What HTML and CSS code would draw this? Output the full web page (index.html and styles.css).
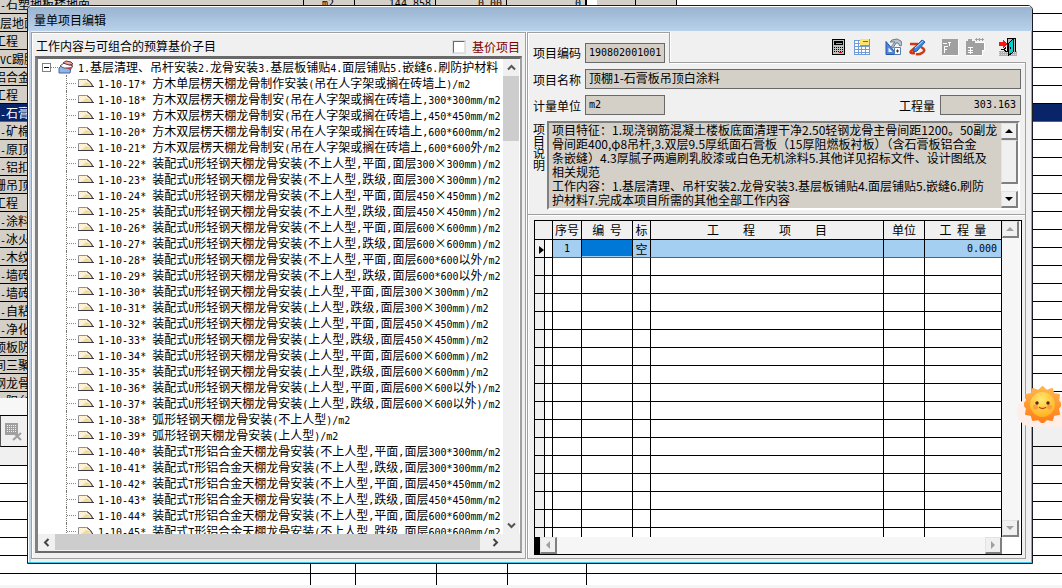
FILE: index.html
```html
<!DOCTYPE html>
<html lang="zh-CN">
<head>
<meta charset="utf-8">
<title>量单项目编辑</title>
<link rel="stylesheet" href="styles.css">
</head>
<body>
<div class="backdrop">
  <div class="back-rows" id="backRows"></div>
  <div class="back-gap"></div>
  <div class="back-tools">
    <svg width="18" height="18" viewBox="0 0 18 18" shape-rendering="crispEdges"><path fill="#a0a0a0" d="M0 0h13v12H0z"/><path stroke="#f0f0f0" stroke-dasharray="1 1" d="M2 2.5h10M2 4.5h10M2 6.5h10M2 8.5h10"/><path stroke="#a0a0a0" stroke-width="2" d="M9 10l7 7M16 10l-8 7" shape-rendering="auto"/></svg>
  </div>
  <div class="back-head"></div>
  <div class="back-grid" id="backGrid"></div>
</div>

<main class="dialog">
  <h1 class="title">量单项目编辑</h1>
  <div class="content">
    <section class="left">
      <div class="left-head">
        <span class="left-title">工作内容与可组合的预算基价子目</span>
        <label class="base"><input type="checkbox"><span>基价项目</span></label>
      </div>
      <div class="tree-box">
        <ul class="tree" id="tree"></ul>
        <div class="vbar">
          <button type="button" aria-label="向上"><svg width="9" height="7" viewBox="0 0 9 7"><path d="M1 5.500L4.500 2L8 5.500" fill="none" stroke="#555" stroke-width="2"/></svg></button>
          <div class="track"><div class="thumb"></div></div>
          <button type="button" aria-label="向下"><svg width="9" height="7" viewBox="0 0 9 7"><path d="M1 1.500L4.500 5L8 1.500" fill="none" stroke="#555" stroke-width="2"/></svg></button>
        </div>
        <div class="hbar">
          <button type="button" aria-label="向左"><svg width="7" height="9" viewBox="0 0 7 9"><path d="M5.500 1L2 4.500L5.500 8" fill="none" stroke="#444" stroke-width="2"/></svg></button>
          <div class="track"><div class="thumb"></div></div>
          <button type="button" aria-label="向右"><svg width="7" height="9" viewBox="0 0 7 9"><path d="M1.500 1L5 4.500L1.500 8" fill="none" stroke="#444" stroke-width="2"/></svg></button>
        </div>
      </div>
    </section>

    <section class="right">
      <div class="top">
        <div class="code-tab">
          <label for="code">项目编码</label>
          <input class="field num" id="code" value="190802001001">
        </div>
        <div class="toolbar">
          <button type="button" aria-label="计算器"><svg width="16" height="18" viewBox="0 0 16 18" shape-rendering="crispEdges"><path d="M1 1h13v16H1z" fill="#000"/><path d="M2 2h11v14H2z" fill="#c0c0c0"/><path d="M3 3h9v4H3z"/><path d="M5 5h6v1H5z" fill="#00e8e8"/><path stroke="#000" stroke-dasharray="1 1" d="M3 9.500h10M3 11.500h10M3 13.500h10"/><path d="M8 14h3v1H8z" fill="red"/></svg></button>
          <button type="button" aria-label="表格"><svg width="17" height="18" viewBox="0 0 17 18" shape-rendering="crispEdges"><path d="M0 2h16v15H0z" fill="#6f9bd8"/><g fill="#fff"><path d="M1 3h3v2H1zM5 3h2v2H5zM1 6h3v2H1zM5 6h2v2H5zM1 9h3v2H1zM5 9h2v2H5zM8 9h3v2H8zM12 9h3v2h-3zM1 12h3v2H1zM5 12h2v2H5zM8 12h3v2H8zM12 12h3v2h-3zM1 15h3v1H1zM5 15h2v1H5zM8 15h3v1H8zM12 15h3v1h-3z"/></g><path d="M6 1h10v7H6z" fill="#c69400"/><path d="M6 1h9v6H6z" fill="#ffe36a"/><path d="M9 3h5v1H9z" fill="#986800"/></svg></button>
          <button type="button" class="gap" aria-label="工具"><svg width="17" height="18" viewBox="0 0 17 18"><path d="M1 3.500v13h11z" fill="#4d86db" stroke="#2456a8"/><path d="M3.500 9.500v4.500h4z" fill="#eaf3ff"/><path d="M5 4l2-2 5-1 4 2 1 4-2 1-2-3h-2L8 10l-2-1 4-5z" fill="#b8c4d0" stroke="#6b7a89"/><path d="M9.500 9.500h6v7h-6z" fill="#fff" stroke="#557db5"/><path d="M11 13h3M12.500 11.500v3" stroke="#333"/></svg></button>
          <button type="button" aria-label="编辑"><svg width="18" height="18" viewBox="0 0 18 18"><path d="M1 6h8M12 9q6 3 1 6q-3 2-6 1M8 8L2 13q-2 3 4 2" fill="none" stroke="#cb3a10" stroke-width="2.500"/><path d="M4 14l1-4 8-8 3 2-8 9z" fill="#3f87e0" stroke="#1c58ac"/><path d="M6 10l8-7" stroke="#bfe0ff"/></svg></button>
          <button type="button" class="gap" disabled aria-label="字体"><svg width="18" height="18" viewBox="0 0 18 18" shape-rendering="crispEdges"><path d="M2 2h16v16H2z" fill="#fff"/><path d="M1 1h16v16H1z" fill="#a0a0a0"/><path fill="none" stroke="#fff" d="M2 5.500h4M7 4.500h3M8.500 5v3M3.500 8v7M4 8.500h3M4 11.500h2"/></svg></button>
          <button type="button" disabled aria-label="价格"><svg width="20" height="19" viewBox="0 0 20 19" shape-rendering="crispEdges"><path d="M1 4h2V2h4v2h12v9h-2v5H1z" fill="#fff"/><path d="M0 3h2V1h4v2h3v2h9v7h-2v5H0z" fill="#a0a0a0"/><path stroke="#a0a0a0" d="M9 1.500h9M10.500 0v3M13.500 0v3M16.500 0v3"/><path fill="none" stroke="#fff" d="M2 9.500h5M2 12.500h5M2 14.500h5M4.500 9v7"/></svg></button>
          <button type="button" class="gap2" aria-label="退出"><svg width="19" height="19" viewBox="0 0 19 19" shape-rendering="crispEdges"><path d="M0 13h18v5H0z" fill="#b0b0b0"/><path stroke="#ddd" stroke-dasharray="1 1" d="M0 14.500h18M0 16.500h18"/><path d="M8 0h9v14H8z" fill="#000"/><path d="M9 1h7v13H9z" fill="#b8b8b8"/><path d="M9 6l5-5v13l-5 4z" fill="#00d0d0" stroke="#000"/><path d="M11 9h1v2h-1z"/><path d="M0 4h4V2l4 4-4 4V8H0z" fill="#f01818"/><path fill="none" stroke="#000" d="M2 11.500h3l2-2M5 12l3 2"/></svg></button>
        </div>
      </div>
      <div class="details">
        <div class="line"><label for="name">项目名称</label><input class="field" id="name" value="顶棚1-石膏板吊顶白涂料"></div>
        <div class="line"><label for="unit">计量单位</label><input class="field num unit" id="unit" value="m2"><span class="spacer"></span><label class="qty-label" for="qty">工程量</label><input class="field num qty" id="qty" value="303.163"></div>
        <div class="note">
          <label for="note">项目说明</label>
          <div class="note-box">
            <textarea id="note">项目特征：1.现浇钢筋混凝土楼板底面清理干净2.50轻钢龙骨主骨间距1200。50副龙
骨间距400,φ8吊杆,3.双层9.5厚纸面石膏板（15厚阻燃板衬板）（含石膏板铝合金
条嵌缝）4.3厚腻子两遍刷乳胶漆或白色无机涂料5.其他详见招标文件、设计图纸及
相关规范
工作内容：1.基层清理、吊杆安装2.龙骨安装3.基层板铺贴4.面层铺贴5.嵌缝6.刷防
护材料7.完成本项目所需的其他全部工作内容</textarea>
            <div class="classic">
              <button type="button" class="up dark" aria-label="向上"></button>
              <div class="classic-thumb"></div>
              <button type="button" class="down dark" aria-label="向下"></button>
            </div>
          </div>
        </div>
      </div>
      <div class="grid-area">
        <div class="grid-frame">
          <div class="grid-view">
            <table class="grid">
              <colgroup><col class="c-mark"><col class="c-pad"><col class="c-no"><col class="c-code"><col class="c-flag"><col><col class="c-unit"><col class="c-qty"></colgroup>
              <thead><tr><th colspan="2"></th><th>序号</th><th>编&nbsp; 号</th><th>标</th><th class="wide"><span>工</span><span>程</span><span>项</span><span>目</span></th><th>单位</th><th>工&nbsp; 程&nbsp; 量</th></tr></thead>
              <tbody id="gridBody"><tr class="current"><td class="mark"><i class="pointer"></i></td><td class="pad"></td><td class="no">1</td><td class="active"></td><td class="flag">空</td><td></td><td></td><td class="amount">0.000</td></tr></tbody>
            </table>
          </div>
          <div class="classic">
            <button type="button" class="up" aria-label="向上"></button>
            <button type="button" class="down" aria-label="向下"></button>
          </div>
          <div class="classic-h">
            <span class="split"></span>
            <button type="button" class="prev" aria-label="向左"></button>
            <button type="button" class="next" aria-label="向右"></button>
          </div>
          <div class="corner"></div>
        </div>
      </div>
    </section>
  </div>
</main>

<div class="sun">
  <svg width="37" height="37" viewBox="0 0 37 37">
    <defs>
      <radialGradient id="face" cx=".45" cy=".3" r=".7"><stop offset="0" stop-color="#ffe873"/><stop offset="1" stop-color="#ffb21e"/></radialGradient>
      <linearGradient id="rays" x2="0" y2="1"><stop offset="0" stop-color="#ffb650"/><stop offset="1" stop-color="#ff7c16"/></linearGradient>
    </defs>
    <path fill="url(#rays)" stroke="url(#rays)" stroke-width="2" stroke-linejoin="round" d="M18.500 1l4 4 5.500-2 1.500 5 5.500 1-1 5.500 3 4-3 4 1 5.500-5.500 1-1.500 5-5.500-1-4 4-4-4-5.500 1-1.500-5-5.500-1 1-5.500-3-4 3-4-1-5.500 5.500-1L9 3l5.500 2z"/>
    <circle cx="18.500" cy="18.500" r="12.500" fill="url(#face)"/>
    <circle cx="11.500" cy="21" r="2.500" fill="#ff9a45"/><circle cx="25.500" cy="21" r="2.500" fill="#ff9a45"/>
    <circle cx="13" cy="17" r="1.700" fill="#5a2410"/><circle cx="24" cy="17" r="1.700" fill="#5a2410"/>
    <path d="M15.500 21.500q3 2 6 0" fill="none" stroke="#c73d12" stroke-width="1.500" stroke-linecap="round"/>
  </svg>
</div>
<script src="app.js"></script>
</body>
</html>
```

FILE: styles.css
```css
* { box-sizing: border-box; }

body {
  margin: 0;
  height: 100vh;
  overflow: hidden;
  position: relative;
  background: #fff;
  color: #000;
  font: 12px/16px "Noto Sans CJK SC", sans-serif;
}

button, input, textarea { font: inherit; color: inherit; margin: 0; padding: 0; border: 0; border-radius: 0; }
button { background: transparent; }

.num, .a { font-family: "DejaVu Sans Mono", monospace; font-size: 10px; }
.x { display: inline-block; width: 12px; text-align: center; }

/* table behind the dialog */
.backdrop { height: 100%; display: flex; flex-direction: column; overflow: hidden; }
.back-rows { height: 398px; flex: none; overflow: hidden; }
.back-row { display: flex; height: 18px; line-height: 17px; white-space: nowrap; }
.back-row:first-child { height: 14px; line-height: 8px; }
.back-row > span { border-right: 1px solid #000; border-bottom: 1px solid #000; background: #d4d0c8; overflow: hidden; padding-right: 4px; text-align: right; flex: none; }
.back-row > .name { width: 304px; text-align: left; }
.back-row > .cut { text-indent: -6px; }
.back-row > .unit-col { width: 51px; padding-right: 20px; }
.back-row > .w81 { width: 81px; }
.back-row > .w71 { width: 71px; }
.back-row > .w80 { width: 80px; border-right-width: 2px; }
.back-row > .w39 { width: 39px; margin-left: 10px; }
.back-row > .w41 { width: 41px; }
.back-row > .rest { flex: 1; background: #fff; border-right: 0; }
.back-row.sel > span { background: #0a246a; color: #fff; border-color: #0078d7; }
.back-gap { height: 18px; flex: none; background: #f7f7f7; border-bottom: 1px solid #000; }
.back-tools { height: 31px; flex: none; background: #f0f0f0; border-bottom: 1px solid #000; padding: 7px 4px; border-left: 1px solid #555; }
.back-head { height: 19px; flex: none; background: #f0f0f0; border-bottom: 1px solid #000; }
.back-grid { flex: 1; overflow: hidden; border-bottom: 3px solid #f4f4f4; }
.back-line { display: flex; height: 18px; border-bottom: 1px solid #000; }
.back-line:last-child { border-bottom: 0; }
.back-line i { border-right: 1px solid #000; width: 81px; }
.back-line i:nth-child(1) { width: 311px; }
.back-line i:nth-child(2) { width: 45px; }
.back-line i:nth-child(4) { width: 71px; }
.back-line i:nth-child(5) { width: 79px; }

/* dialog window */
.dialog {
  position: absolute;
  inset: 5px 29px 24px 27px;
  display: flex;
  flex-direction: column;
  background: #f0f0f0;
  border: 1px solid #1c1c24;
  border-radius: 5px 5px 0 0;
  box-shadow: inset -1px -1px #3cc8e8, inset 1px 0 #fff, inset 3px 0 #c4d4e6;
  overflow: hidden;
}
.title { flex: none; margin: 0; height: 25px; padding-left: 6px; font-size: 12px; line-height: 27px; font-weight: 400; background: linear-gradient(#fff 1px, #99b4d1 1px, #b9d1ea); }
.content { flex: 1; min-height: 0; display: flex; padding: 1px 6px 4px 3px; }

.left { width: 495px; flex: none; display: flex; flex-direction: column; border: 1px solid #a0a0a0; box-shadow: inset 1px 1px #fff, 1px 0 #fff; padding: 0 3px 5px; }
.left-head { height: 23px; flex: none; display: flex; justify-content: space-between; align-items: center; padding: 2px 2px 0 1px; }
.base { display: flex; align-items: center; gap: 7px; color: #800000; padding-top: 2px; }
.base input { appearance: none; width: 12px; height: 12px; background: #fff; border: 1px solid; border-color: #696969 #e3e3e3 #e3e3e3 #696969; outline: 1px solid #ddd; outline-offset: 0; }

.tree-box {
  flex: 1; min-height: 0;
  display: grid;
  grid-template: minmax(0, 1fr) 17px / minmax(0, 1fr) 17px;
  background: #fff;
  border: solid; border-width: 3px 2px 2px 3px;
  border-color: #696969 #a0a0a0 #696969 #808080;
}
.tree { margin: 0; padding: 0; list-style: none; overflow: hidden; white-space: nowrap; }
.tree li { height: 16px; display: flex; align-items: center; padding-left: 28px; }
.tree li::before { content: ""; width: 11px; height: 16px; flex: none; border-left: 1px dotted #777; background: repeating-linear-gradient(90deg, #888 0 1px, transparent 1px 2px) 0 8px / 10px 1px no-repeat; }
.tree li.root { padding-left: 4px; }
.tree li.root::before { display: none; }
.tree svg { flex: none; margin-right: 4px; }
.tree .fold { width: 9px; height: 9px; border: 1px solid #808080; background: linear-gradient(#000, #000) center / 5px 1px no-repeat; }
.tree .dots { width: 7px; height: 1px; background: repeating-linear-gradient(90deg, #888 0 1px, transparent 1px 2px); }
.tree p { margin: 0; line-height: 16px; height: 16px; }
.tree .a { white-space: pre; }

.vbar, .hbar { display: flex; background: #f0f0f0; }
.vbar { flex-direction: column; margin-right: 1px; }
.hbar { grid-column: 1 / 3; }
.vbar button, .hbar button { width: 16px; height: 17px; flex: none; display: grid; place-items: center; }
.hbar button { width: 17px; height: 16px; }
.hbar button:last-child { width: 40px; padding-right: 10px; }
.track { flex: 1; min-height: 0; }
.thumb { background: #cdcdcd; }
.vbar .thumb { height: 65px; }
.hbar .thumb { height: 16px; }

/* right side */
.right { flex: 1; min-width: 0; margin-left: 1px; display: flex; flex-direction: column; }
.top { height: 31px; flex: none; display: flex; }
.code-tab { width: 143px; flex: none; display: flex; align-items: center; padding: 10px 4px 0 5px; border: 1px solid #a0a0a0; border-bottom: 0; box-shadow: inset 1px 1px #fff, 1px 0 #fff; }
.code-tab label { flex: none; width: 52px; }
.code-tab .field { width: 80px; }
.toolbar { flex: 1; border-bottom: 1px solid #a0a0a0; box-shadow: 0 1px #fff; display: flex; justify-content: flex-end; align-items: center; gap: 7px; padding: 0 8px 0 0; }
.toolbar button { flex: none; height: 18px; }
.toolbar svg { display: block; }
.toolbar .gap { margin-left: 7px; }
.toolbar .gap2 { margin-left: 6px; }

.field { min-width: 0; height: 20px; padding: 0 2px 1px 3px; background: #d4d0c8; border: 1px solid #696969; }
.details { flex: none; height: 152px; border: 1px solid #a0a0a0; border-top: 0; box-shadow: inset 1px 0 #fff, 0 1px #fff; padding: 6px 4px 4px 5px; display: flex; flex-direction: column; gap: 6px; }
.line { display: flex; align-items: center; height: 20px; flex: none; }
.line > label { flex: none; width: 52px; padding-top: 1px; }
.line #name { flex: 1; padding-bottom: 3px; }
.line .unit { width: 80px; }
.spacer { flex: 1; }
.line > .qty-label { width: 41px; }
.line .qty { width: 81px; text-align: right; padding-right: 4px; }
.note { display: flex; flex: 1; min-height: 0; }
.note > label { width: 14px; padding: 2px 2px 0 0; line-height: 12px; overflow: hidden; }
.note-box { flex: 1; min-width: 0; display: flex; margin-right: 1px; border: 2px solid; border-color: #808080 #fff #fff #808080; }
.note textarea { flex: 1; min-width: 0; resize: none; overflow: hidden; white-space: pre; background: #d4d0c8; line-height: 14px; padding: 0 3px; outline: 0; }

.classic { width: 17px; flex: none; display: flex; flex-direction: column; background: #f6f6f6; }
.classic button, .classic-h button, .classic-thumb {
  flex: none; width: 17px; height: 17px;
  display: grid; place-items: center;
  background: #f0f0f0;
  border: solid; border-width: 1px 2px 2px 1px;
  border-color: #e3e3e3 #808080 #808080 #e3e3e3;
}
.classic .classic-thumb { height: 44px; }
.classic .down { margin-top: auto; }
.classic button::before, .classic-h button::before { content: ""; border: 4px solid transparent; }
.classic .up::before { border-width: 0 4px 4px; border-bottom-color: #a0a0a0; }
.classic .down::before { border-width: 4px 4px 0; border-top-color: #a0a0a0; }
.classic .dark.up::before { border-bottom-color: #000; }
.classic .dark.down::before { border-top-color: #000; }
.classic-h .prev::before { border-width: 4px 4px 4px 0; border-right-color: #a0a0a0; }
.classic-h .next::before { border-width: 4px 0 4px 4px; border-left-color: #a0a0a0; }

.grid-area { flex: 1; min-height: 0; display: flex; border: 1px solid #a0a0a0; border-top: 0; padding: 5px 3px 3px 6px; box-shadow: inset 1px 0 #fff; }
.grid-frame {
  flex: 1; min-width: 0;
  display: grid;
  grid-template: minmax(0, 1fr) 17px / minmax(0, 1fr) 19px;
  border: 1px solid #000;
  background: #fff;
}
.grid-view { overflow: hidden; }
.grid { width: 100%; table-layout: fixed; border-collapse: separate; border-spacing: 0; line-height: 16px; }
.grid th, .grid td { height: 18px; padding: 0; border-right: 1px solid #000; border-bottom: 1px solid #000; font-weight: 400; text-align: center; white-space: nowrap; }
.grid th { height: 19px; background: #f0f0f0; }
.c-mark { width: 10px; }
.c-pad { width: 8px; }
.c-no { width: 29px; }
.c-code { width: 51px; }
.c-flag { width: 18px; }
.c-unit { width: 41px; }
.c-qty { width: 77px; }
.grid .wide span { display: inline-block; width: 36px; }
.grid .mark { background: #f0f0f0; }
.pointer { display: block; margin: 3px 0 0 4px; width: 0; border: 4px solid transparent; border-width: 4px 0 4px 5px; border-left-color: #000; }
.grid .current td { background: #a5cff0; border-bottom-color: #0078d7; }
.grid .current .mark { background: #f0f0f0; border-bottom-color: #000; }
.grid .current .pad { background: #fff; border-bottom-color: #000; }
.grid .current .active { background: #0078d7; box-shadow: inset 0 -1px #a5cff0; }
.grid .no, .grid .amount { font-family: "DejaVu Sans Mono", monospace; font-size: 10px; }
.grid .amount { text-align: right; padding-right: 4px; }
.grid-frame .classic { padding-right: 1px; width: 18px; }
.classic-h { display: flex; background: #f6f6f6; }
.classic-h .split { width: 5px; background: #000; }
.classic-h .next { margin-left: auto; }

/* mascot floating over the window edge */
.sun { position: absolute; right: 0; top: 397px; width: 45px; height: 30px; border-radius: 15px 0 0 15px; background: #ffeee8; }
.sun svg { position: absolute; right: 1px; top: -11px; }
```

FILE: app.js
```js
const tree = document.getElementById('tree');

// Latin runs use the monospaced face; the multiplication sign takes a full CJK cell.
function mixed(text) {
  return text
    .replace(/[\x21-\x7e ]+/g, run => `<span class="a">${run}</span>`)
    .replace(/×/g, '<span class="x">×</span>');
}

const rootIcon = '<svg width="16" height="14" viewBox="0 0 16 14"><path d="M1 8l3-3 9 3-1 5H1z" fill="#8fb6e6" stroke="#3f68a0"/><path d="M2 6l4-3 9 3-3 2H6z" fill="#fff" stroke="#555"/><path d="M5 3l3-2 5 1 2 2-4 1z" fill="#f4a9a9" stroke="#70333c"/><path d="M8 8l7-1-3 3z" fill="#c43b48"/></svg>';
const leafIcon = '<svg width="16" height="10" viewBox="0 0 16 10"><path d="M.5 8.500V1.500h8q4 2 6 7z" fill="#fff3d6" stroke="#8b9298"/><path d="M3 8l5-4 3 1 2 3z" fill="#f7d9a0"/><path d="M0 8.500h16M9 1.500q4 2 6 7" fill="none" stroke="#3b3b44"/></svg>';

const U = '装配式U形轻钢天棚龙骨安装';
const T = '装配式T形铝合金天棚龙骨安装';
const W = '方木双层楞天棚龙骨制安(吊在人字架或搁在砖墙上,';
const items = [
  '方木单层楞天棚龙骨制作安装(吊在人字架或搁在砖墙上)/m2',
  W + '300*300mm/m2', W + '450*450mm/m2', W + '600*600mm/m2', W + '600*600外/m2'
];
['300×300mm)', '450×450mm)', '600×600mm)', '600*600以外'].forEach(s =>
  ['平面', '跌级'].forEach(k => items.push(`${U}(不上人型,${k},面层${s}/m2`)));
['300×300mm)', '450×450mm)', '600×600mm)', '600×600以外)'].forEach(s =>
  ['平面', '跌级'].forEach(k => items.push(`${U}(上人型,${k},面层${s}/m2`)));
items.push('弧形轻钢天棚龙骨安装(不上人型)/m2', '弧形轻钢天棚龙骨安装(上人型)/m2');
['300*300mm', '450*450mm', '600*600mm'].forEach(s =>
  ['平面', '跌级'].forEach(k => items.push(`${T}(不上人型,${k},面层${s}/m2`)));

tree.innerHTML =
  `<li class="root"><span class="fold"></span><span class="dots"></span>${rootIcon}<p>${mixed('1.基层清理、吊杆安装2.龙骨安装3.基层板铺贴4.面层铺贴5.嵌缝6.刷防护材料')}</p></li>` +
  items.map((t, i) => `<li>${leafIcon}<p>${mixed(`1-10-${17 + i}* ${t}`)}</p></li>`).join('');

const names = ['-石塑地板楼地面', '层地面', '/工程', 'VC踢脚', '/铝合金', '/工程', '-石膏', '-矿棉', '-原顶', '-铝扣', '/栅吊顶', '/工程',
  '-涂料', '-冰火', '-木纹', '-墙砖', '-墙砖', '-自粘', '-净化', '/顶板防', '/间三聚', '/钢龙骨', '-阳台'];
document.getElementById('backRows').innerHTML = names.map((n, i) => {
  const cut = n[0] === '/';
  const v = i ? ['', '', '', ''] : ['m2', '144.858', '0.00', '0'];
  return `<div class="back-row${i === 6 ? ' sel' : ''}"><span class="name${cut ? ' cut' : ''}">${mixed(cut ? n.slice(1) : n)}</span>` +
    `<span class="num unit-col">${v[0]}</span><span class="num w81">${v[1]}</span><span class="num w71">${v[2]}</span><span class="num w80">${v[3]}</span>` +
    '<span class="w39"></span><span class="w41"></span><span class="rest"></span></div>';
}).join('');

document.getElementById('backGrid').innerHTML = '<div class="back-line"><i></i><i></i><i></i><i></i><i></i></div>'.repeat(7);
document.getElementById('gridBody').insertAdjacentHTML('beforeend',
  ('<tr><td class="mark"></td>' + '<td></td>'.repeat(7) + '</tr>').repeat(16));
```
